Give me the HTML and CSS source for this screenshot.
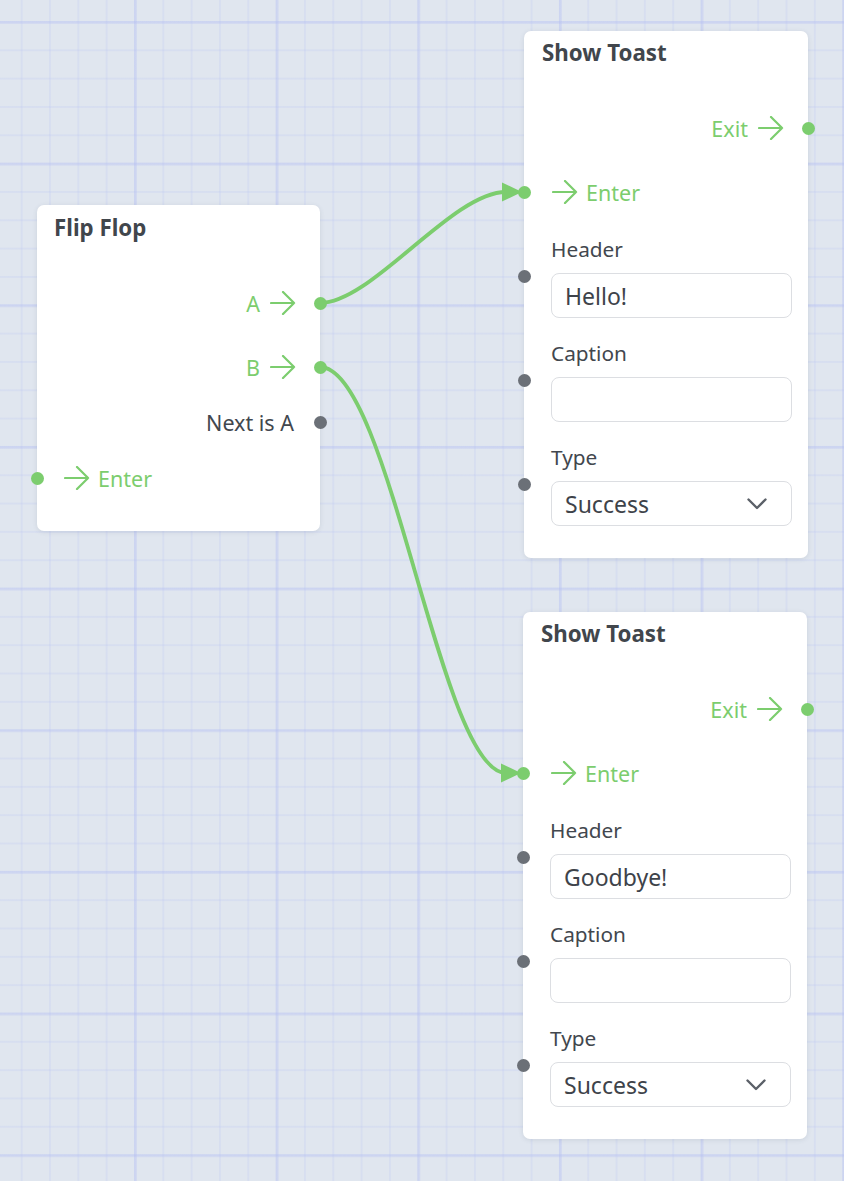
FILE: index.html
```html
<!DOCTYPE html>
<html lang="en">
<head>
<meta charset="utf-8">
<title>Flow graph</title>
<link rel="stylesheet" href="styles.css">
</head>
<body>
<div class="canvas">
  <svg class="wires" width="844" height="1181" viewBox="0 0 844 1181">
    <path class="wire" d="M320 303 C 372 303, 452 192, 506 192"/>
    <polygon class="wire-head" points="502,182.5 502,201.5 522,192"/>
    <path class="wire" d="M320 367 C 390 367, 440 773, 506 773"/>
    <polygon class="wire-head" points="501,763.5 501,782.5 521,773"/>
  </svg>

  <div class="node node-flipflop">
    <div class="node-title">Flip Flop</div>
    <div class="port port-out exec first">
      <span>A</span>
      <svg class="arrow" viewBox="0 0 28 26"><path d="M1 13 H26 M14 1 L26 13 L14 25"/></svg>
      <i class="handle handle-exec"></i>
    </div>
    <div class="port port-out exec second">
      <span>B</span>
      <svg class="arrow" viewBox="0 0 28 26"><path d="M1 13 H26 M14 1 L26 13 L14 25"/></svg>
      <i class="handle handle-exec"></i>
    </div>
    <div class="port port-out data third">
      <span>Next is A</span>
      <i class="handle handle-data"></i>
    </div>
    <div class="port port-in exec fourth">
      <i class="handle handle-exec"></i>
      <svg class="arrow" viewBox="0 0 28 26"><path d="M1 13 H26 M14 1 L26 13 L14 25"/></svg>
      <span>Enter</span>
    </div>
  </div>

  <div class="node node-toast toast-a">
    <div class="node-title">Show Toast</div>
    <div class="port port-out exec first">
      <span>Exit</span>
      <svg class="arrow" viewBox="0 0 28 26"><path d="M1 13 H26 M14 1 L26 13 L14 25"/></svg>
      <i class="handle handle-exec"></i>
    </div>
    <div class="port port-in exec second">
      <i class="handle handle-exec"></i>
      <svg class="arrow" viewBox="0 0 28 26"><path d="M1 13 H26 M14 1 L26 13 L14 25"/></svg>
      <span>Enter</span>
    </div>
    <div class="field field-first">
      <i class="handle handle-data field-handle"></i>
      <div class="field-label">Header</div>
      <div class="field-box">Hello!</div>
    </div>
    <div class="field">
      <i class="handle handle-data field-handle"></i>
      <div class="field-label">Caption</div>
      <div class="field-box"></div>
    </div>
    <div class="field">
      <i class="handle handle-data field-handle"></i>
      <div class="field-label">Type</div>
      <div class="field-box select">
        <span>Success</span>
        <svg class="chevron" viewBox="0 0 20 12"><path d="M1.5 1.5 L10 10 L18.5 1.5"/></svg>
      </div>
    </div>
  </div>

  <div class="node node-toast toast-b">
    <div class="node-title">Show Toast</div>
    <div class="port port-out exec first">
      <span>Exit</span>
      <svg class="arrow" viewBox="0 0 28 26"><path d="M1 13 H26 M14 1 L26 13 L14 25"/></svg>
      <i class="handle handle-exec"></i>
    </div>
    <div class="port port-in exec second">
      <i class="handle handle-exec"></i>
      <svg class="arrow" viewBox="0 0 28 26"><path d="M1 13 H26 M14 1 L26 13 L14 25"/></svg>
      <span>Enter</span>
    </div>
    <div class="field field-first">
      <i class="handle handle-data field-handle"></i>
      <div class="field-label">Header</div>
      <div class="field-box">Goodbye!</div>
    </div>
    <div class="field">
      <i class="handle handle-data field-handle"></i>
      <div class="field-label">Caption</div>
      <div class="field-box"></div>
    </div>
    <div class="field">
      <i class="handle handle-data field-handle"></i>
      <div class="field-label">Type</div>
      <div class="field-box select">
        <span>Success</span>
        <svg class="chevron" viewBox="0 0 20 12"><path d="M1.5 1.5 L10 10 L18.5 1.5"/></svg>
      </div>
    </div>
  </div>
</div>
</body>
</html>
```

FILE: styles.css
```css
* { box-sizing: border-box; }

html, body {
  margin: 0;
  padding: 0;
}

body {
  font-family: "Noto Sans", "Open Sans", sans-serif;
  color: #42474e;
}

.canvas {
  position: relative;
  width: 844px;
  height: 1181px;
  overflow: hidden;
  background-color: #e0e6ef;
  background-image:
    linear-gradient(to right, rgba(180, 190, 242, 0.3) 0, rgba(180, 190, 242, 0.3) 2.5px, transparent 2.5px),
    linear-gradient(to bottom, rgba(180, 190, 242, 0.3) 0, rgba(180, 190, 242, 0.3) 2.5px, transparent 2.5px),
    linear-gradient(to right, rgba(188, 198, 242, 0.24) 0, rgba(188, 198, 242, 0.24) 1.5px, transparent 1.5px),
    linear-gradient(to bottom, rgba(188, 198, 242, 0.24) 0, rgba(188, 198, 242, 0.24) 1.5px, transparent 1.5px);
  background-size:
    141.67px 141.67px,
    141.67px 141.67px,
    28.333px 28.333px,
    28.333px 28.333px;
  background-position:
    134px 21px,
    134px 21px,
    20.7px 21px,
    20.7px 21px;
}

.wires {
  position: absolute;
  left: 0;
  top: 0;
}

.wire {
  fill: none;
  stroke: #7ccd6e;
  stroke-width: 3.8;
  stroke-linecap: round;
}

.wire-head {
  fill: #7ccd6e;
}

.node {
  position: absolute;
  background: #ffffff;
  border-radius: 7px;
  box-shadow: 0 1px 5px rgba(60, 70, 90, 0.12);
  display: flex;
  flex-direction: column;
}

.node-flipflop {
  left: 37px;
  top: 205px;
  width: 283px;
  height: 326px;
  padding-top: 8px;
}

.node-toast {
  width: 284px;
  height: 527px;
  padding-top: 7px;
}

.toast-a { left: 524px; top: 31px; }
.toast-b { left: 523px; top: 612px; }

.node-title {
  height: 30px;
  line-height: 30px;
  padding-left: 17px;
  font-size: 22.3px;
  font-weight: 700;
  color: #41464c;
}

.node-toast .node-title { padding-left: 18px; }

.port {
  position: relative;
  height: 40px;
  display: flex;
  align-items: center;
  font-size: 21.5px;
}

.port.exec { color: #7ccd6e; }
.port.data { color: #42474e; }

.port-out {
  justify-content: flex-end;
  gap: 10px;
  padding-right: 24px;
}

.port-out.data { padding-right: 26px; }

.port-in {
  justify-content: flex-start;
  gap: 8px;
  padding-left: 27px;
}

.node-toast .port-in { padding-left: 28px; }

.arrow {
  width: 26px;
  height: 24px;
  fill: none;
  stroke: #7ccd6e;
  stroke-width: 2.4;
  stroke-linecap: round;
  stroke-linejoin: round;
}

.node-flipflop .first { margin-top: 40px; }
.node-flipflop .second { margin-top: 24px; }
.node-flipflop .third { margin-top: 15px; }
.node-flipflop .fourth { margin-top: 16px; }

.node-toast .first { margin-top: 40px; }
.node-toast .second { margin-top: 24px; }

.handle {
  position: absolute;
  width: 13px;
  height: 13px;
  border-radius: 50%;
  top: 50%;
  margin-top: -6.5px;
}

.port-out .handle { right: -6.5px; }
.port-in .handle { left: -6.5px; }

.handle-exec { background: #7ccd6e; }
.handle-data { background: #6b7077; }

.field {
  position: relative;
  margin-top: 21px;
  padding-left: 27px;
  padding-right: 16px;
}

.field.field-first { margin-top: 23px; }

.field .field-handle {
  left: -6.5px;
  top: 41px;
  margin-top: -6.5px;
}

.field-label {
  height: 28px;
  line-height: 28px;
  font-size: 20.8px;
  color: #42474e;
}

.field-box {
  margin-top: 10px;
  height: 45px;
  border: 1px solid #dcdee2;
  border-radius: 8px;
  padding: 0 13px;
  display: flex;
  align-items: center;
  font-size: 23px;
  color: #3e434a;
  background: #ffffff;
}

.field-box.select {
  justify-content: space-between;
  padding-right: 24px;
}

.chevron {
  width: 20px;
  height: 12px;
  fill: none;
  stroke: #5b6068;
  stroke-width: 2.4;
  stroke-linecap: round;
  stroke-linejoin: round;
}
```
